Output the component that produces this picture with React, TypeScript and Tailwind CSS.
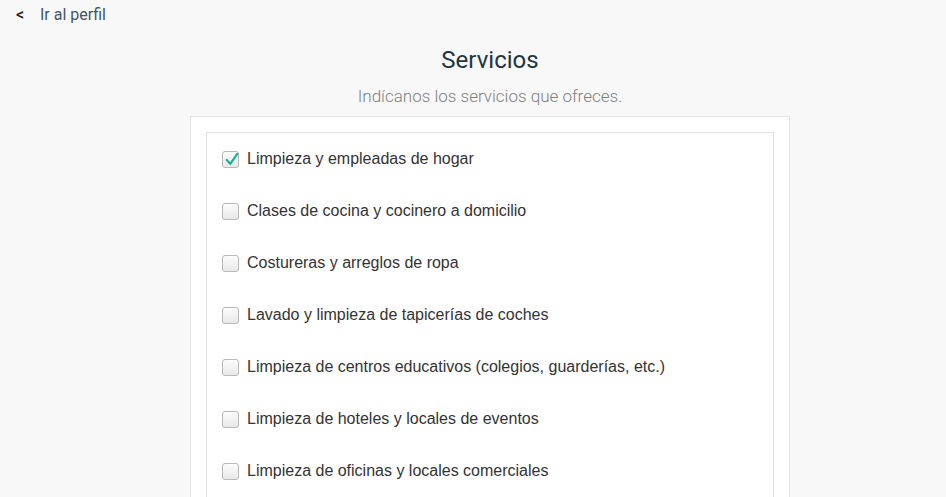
import React from "react";

const items = [
  { label: "Limpieza y empleadas de hogar", checked: true },
  { label: "Clases de cocina y cocinero a domicilio", checked: false },
  { label: "Costureras y arreglos de ropa", checked: false },
  { label: "Lavado y limpieza de tapicerías de coches", checked: false },
  { label: "Limpieza de centros educativos (colegios, guarderías, etc.)", checked: false },
  { label: "Limpieza de hoteles y locales de eventos", checked: false },
  { label: "Limpieza de oficinas y locales comerciales", checked: false },
];

function Box({ checked }: { checked: boolean }) {
  return (
    <span className="relative w-[17px] h-[17px] rounded-[3px] border border-[#b8b8b8] bg-gradient-to-b from-[#fcfcfc] to-[#e8e8e8] shrink-0">
      {checked && (
        <svg viewBox="0 0 16 16" className="absolute left-[2px] top-[0px] w-[14px] h-[15px]">
          <path d="M2 8.5 L6 13 L14 1.5" fill="none" stroke="#16b08d" strokeWidth="2.4" strokeLinecap="round" strokeLinejoin="round" />
        </svg>
      )}
    </span>
  );
}

export default function App() {
  return (
    <div className="h-[497px] bg-[#f8f8f8] overflow-hidden" style={{ fontFamily: "Roboto, 'Liberation Sans', sans-serif" }}>
      <div className="flex items-center h-[29px] pl-[16px] text-[16px] text-[#3a4a5a]">
        <span className="text-[#222] font-medium w-[24px]">&lt;</span>
        <span className="text-[#445566]">Ir al perfil</span>
      </div>
      <div className="ml-[190px] w-[600px]">
        <h1 className="text-center text-[24px] leading-[30px] text-[#233443] mt-[16px]">Servicios</h1>
        <p className="text-center text-[17px] font-light leading-[20px] text-[#7f7f7f] mt-[11px]">Indícanos los servicios que ofreces.</p>
        <div className="mt-[10px] bg-white border border-[#e3e3e3] px-[15px] pt-[15px] pb-[40px]">
          <div className="border border-[#e0e0e0]">
            {items.map((it) => (
              <div key={it.label} className="h-[52px] flex items-center pl-[15px] gap-[8px]" style={{ fontFamily: "'Liberation Sans', Arial, sans-serif" }}>
                <Box checked={it.checked} />
                <span className="text-[16px] text-[#333]">{it.label}</span>
              </div>
            ))}
          </div>
        </div>
      </div>
    </div>
  );
}
